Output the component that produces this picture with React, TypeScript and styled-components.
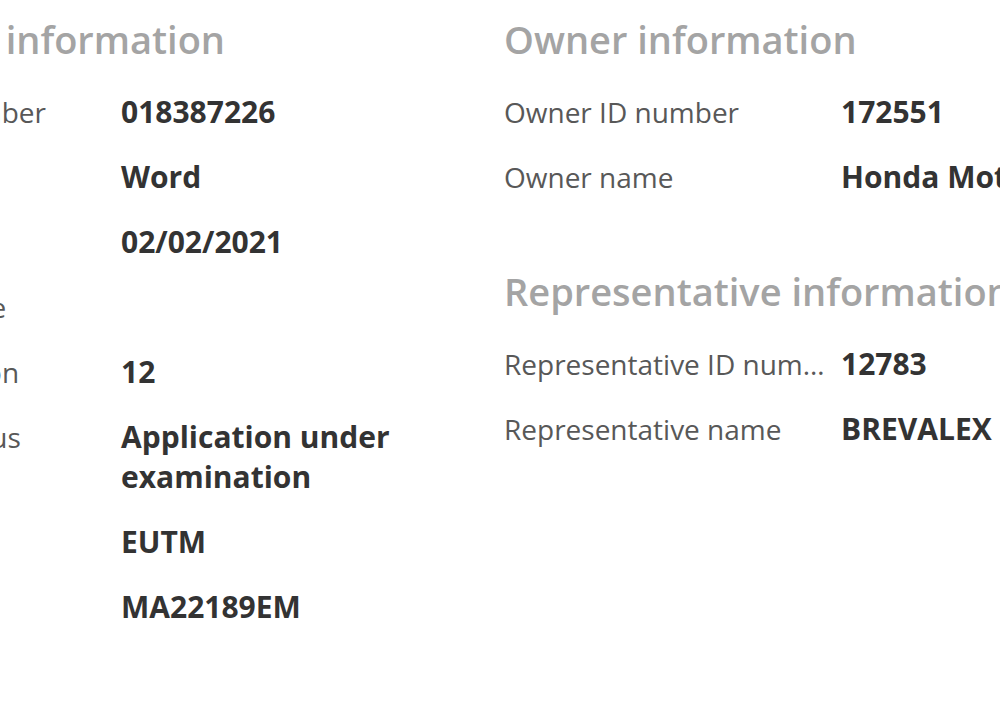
import styled, { createGlobalStyle } from 'styled-components'

const GlobalStyle = createGlobalStyle`
	html, body {
		margin: 0;
		padding: 0;
		background: #ffffff;
	}
	body {
		font-family: 'Open Sans', 'Noto Sans', sans-serif;
	}
`

const Viewport = styled.div`
	width: 1000px;
	height: 705px;
	overflow: hidden;
	background: #ffffff;
`

const Columns = styled.div`
	display: grid;
	grid-template-columns: 720px 820px;
	margin-left: -216px;
	padding-top: 15px;
`

const Column = styled.div`
	display: flex;
	flex-direction: column;
	gap: 70px;
`

const Section = styled.section`
	display: flex;
	flex-direction: column;
`

const Heading = styled.h2`
	margin: 0 0 29px;
	font-size: 38px;
	line-height: 48px;
	font-weight: 600;
	color: #a4a4a4;
	white-space: nowrap;
`

const Rows = styled.div`
	display: flex;
	flex-direction: column;
	gap: 25px;
`

const Row = styled.div`
	display: flex;
	align-items: flex-start;
`

const Label = styled.div`
	flex: 0 0 337px;
	box-sizing: border-box;
	padding-right: 12px;
	font-size: 28px;
	line-height: 40px;
	color: #585858;
	white-space: nowrap;
	overflow: hidden;
	text-overflow: ellipsis;
`

const Value = styled.div`
	flex: 1;
	padding-right: 40px;
	min-height: 40px;
	font-size: 30px;
	line-height: 40px;
	font-weight: 700;
	color: #333333;
`

type Field = { label: string; value: string }

const trademark: Field[] = [
	{ label: 'Trade mark number', value: '018387226' },
	{ label: 'Mark type', value: 'Word' },
	{ label: 'Filing date', value: '02/02/2021' },
	{ label: 'Registration date', value: '' },
	{ label: 'Nice Classification', value: '12' },
	{ label: 'Trade mark status', value: 'Application under examination' },
	{ label: 'Basis', value: 'EUTM' },
	{ label: 'Reference', value: 'MA22189EM' },
]

const owner: Field[] = [
	{ label: 'Owner ID number', value: '172551' },
	{ label: 'Owner name', value: 'Honda Motor Co., Ltd.' },
]

const representative: Field[] = [
	{ label: 'Representative ID number', value: '12783' },
	{ label: 'Representative name', value: 'BREVALEX' },
]

function InfoSection({ title, fields }: { title: string; fields: Field[] }) {
	return (
		<Section>
			<Heading>{title}</Heading>
			<Rows>
				{fields.map((f) => (
					<Row key={f.label}>
						<Label>{f.label}</Label>
						<Value>{f.value}</Value>
					</Row>
				))}
			</Rows>
		</Section>
	)
}

export default function App() {
	return (
		<>
			<GlobalStyle />
			<Viewport>
				<Columns>
					<Column>
						<InfoSection title="Trade mark information" fields={trademark} />
					</Column>
					<Column>
						<InfoSection title="Owner information" fields={owner} />
						<InfoSection title="Representative information" fields={representative} />
					</Column>
				</Columns>
			</Viewport>
		</>
	)
}
